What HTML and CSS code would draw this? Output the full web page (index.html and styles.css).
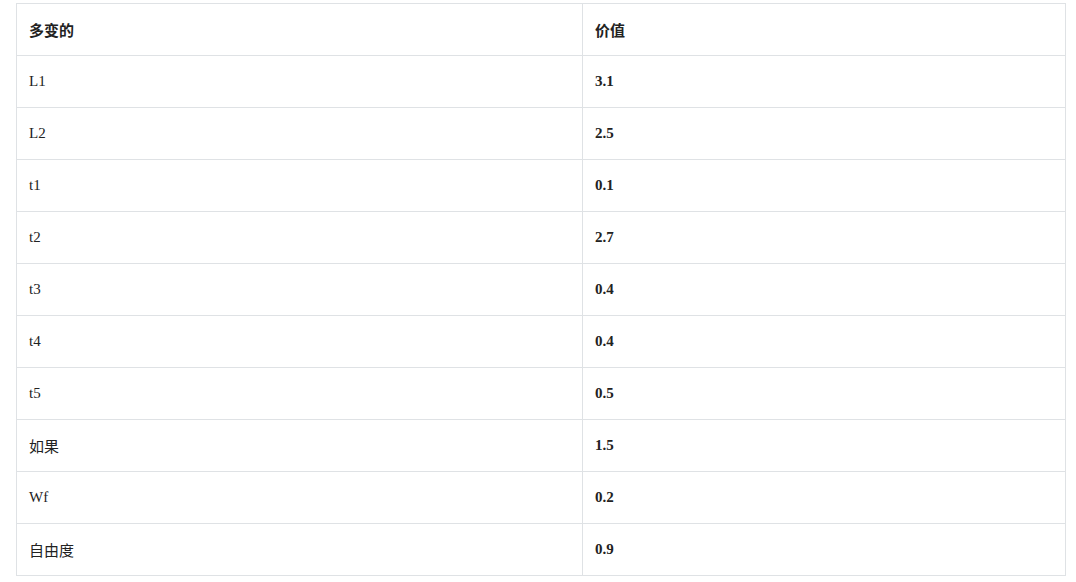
FILE: index.html
```html
<!DOCTYPE html>
<html lang="zh">
<head>
<meta charset="utf-8">
<link rel="stylesheet" href="styles.css">
</head>
<body>
<div class="wrap">
<table class="data">
<thead>
<tr><th class="c1">多变的</th><th class="c2">价值</th></tr>
</thead>
<tbody>
<tr><td>L1</td><td class="val">3.1</td></tr>
<tr><td>L2</td><td class="val">2.5</td></tr>
<tr><td>t1</td><td class="val">0.1</td></tr>
<tr><td>t2</td><td class="val">2.7</td></tr>
<tr><td>t3</td><td class="val">0.4</td></tr>
<tr><td>t4</td><td class="val">0.4</td></tr>
<tr><td>t5</td><td class="val">0.5</td></tr>
<tr><td>如果</td><td class="val">1.5</td></tr>
<tr><td>Wf</td><td class="val">0.2</td></tr>
<tr><td>自由度</td><td class="val">0.9</td></tr>
</tbody>
</table>
</div>
</body>
</html>
```
FILE: styles.css
```css
html, body {
  margin: 0;
  padding: 0;
  background: #ffffff;
}
.wrap {
  padding: 3px 0 0 16px;
}
.data {
  border-collapse: collapse;
  width: 1050px;
  font-family: "Liberation Serif", "Noto Sans CJK SC", serif;
  font-size: 15px;
  color: #222222;
}
.data th, .data td {
  border: 1px solid #dfe2e5;
  height: 52px;
  padding: 0 12px;
  text-align: left;
  vertical-align: middle;
  box-sizing: border-box;
}
.data th {
  font-weight: bold;
}
.c1 {
  width: 566px;
}
.val {
  font-weight: bold;
}
```
